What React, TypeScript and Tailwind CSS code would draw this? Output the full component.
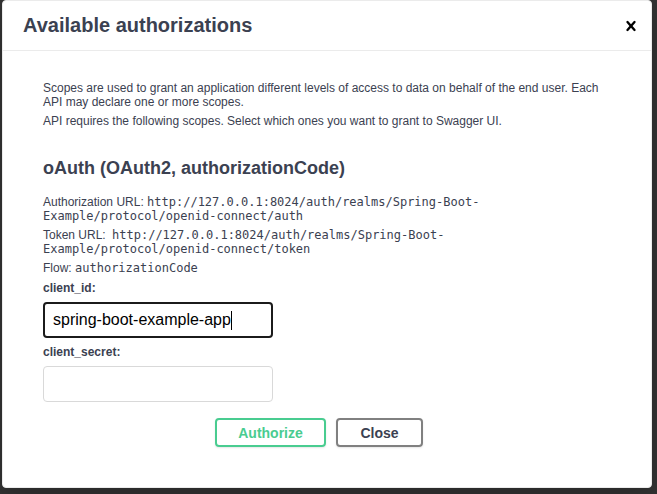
function CloseIcon() {
  return (
    <svg width="20" height="20" viewBox="0 0 20 20" fill="#000" aria-hidden="true">
      <path d="M14.348 14.849a1.2 1.2 0 0 1-1.697 0L10 11.819l-2.651 3.029a1.2 1.2 0 1 1-1.697-1.697l2.758-3.15-2.759-3.152a1.2 1.2 0 1 1 1.697-1.697L10 8.183l2.651-3.031a1.2 1.2 0 1 1 1.697 1.697l-2.758 3.152 2.758 3.15a1.2 1.2 0 0 1 0 1.698z" />
    </svg>
  );
}

const mono = "font-['DejaVu_Sans_Mono',monospace] text-[12px]";

export default function App() {
  return (
    <div className="min-h-[494px] w-full bg-[#333333] pl-[2px] pb-[6px] font-['Liberation_Sans',Arial,sans-serif] text-[#3b4151]">
      <div className="w-[650px] rounded-[4px] border border-[#ebebeb] bg-white shadow-[0_10px_30px_0_rgba(0,0,0,0.2)]">
        {/* header */}
        <div className="flex h-[50px] items-center border-b border-[#ebebeb]">
          <h3 className="flex-1 px-5 text-[20px] font-bold leading-[23px]">Available authorizations</h3>
          <button type="button" className="px-[10px]">
            <CloseIcon />
          </button>
        </div>

        {/* content */}
        <div className="flex flex-col px-10 pt-[30px] pb-[40px] text-[12px] leading-[14px]">
          <p>
            Scopes are used to grant an application different levels of access to data on behalf of the end user. Each
            API may declare one or more scopes.
          </p>
          <p className="mt-[5px]">API requires the following scopes. Select which ones you want to grant to Swagger UI.</p>

          <h4 className="mt-[30px] text-[18px] font-bold leading-[21px]">oAuth (OAuth2, authorizationCode)</h4>

          <p className="mt-[16px]">
            Authorization URL:{' '}
            <code className={mono}>http://127.0.0.1:8024/auth/realms/Spring-Boot-Example/protocol/openid-connect/auth</code>
          </p>
          <p className="mt-[5px]">
            Token URL:{' '}
            <code className={`${mono} ml-[3px]`}>http://127.0.0.1:8024/auth/realms/Spring-Boot-Example/protocol/openid-connect/token</code>
          </p>
          <p className="mt-[5px]">
            Flow: <code className={mono}>authorizationCode</code>
          </p>

          <label className="mt-[6px] font-bold">client_id:</label>
          <div className="mt-[7px] flex h-[36px] w-[230px] items-center self-start rounded-[4px] border-2 border-[#1b1b1b] pl-[8px] text-[16px] text-black">
            <span>spring-boot-example-app</span>
            <span className="h-[19px] w-[1px] bg-black" />
          </div>

          <label className="mt-[7px] font-bold">client_secret:</label>
          <div className="mt-[7px] h-[36px] w-[230px] self-start rounded-[4px] border border-[#d9d9d9] bg-white" />

          <div className="mt-[16px] flex justify-center pr-[16px]">
            <button
              type="button"
              className="mr-[10px] h-[29px] w-[111px] rounded-[4px] border-2 border-[#49cc90] text-[14px] font-bold text-[#49cc90] shadow-[0_1px_2px_rgba(0,0,0,0.1)]"
            >
              Authorize
            </button>
            <button
              type="button"
              className="h-[29px] w-[87px] rounded-[4px] border-2 border-[#808080] text-[14px] font-bold text-[#3b4151] shadow-[0_1px_2px_rgba(0,0,0,0.1)]"
            >
              Close
            </button>
          </div>
        </div>
      </div>
    </div>
  );
}
